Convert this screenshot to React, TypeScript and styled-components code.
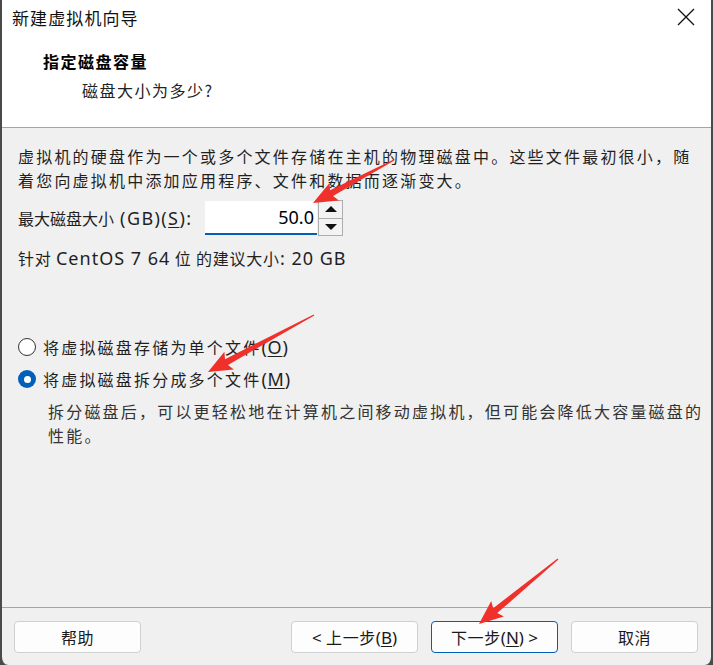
import React from "react";
import styled, { createGlobalStyle } from "styled-components";

const GlobalStyle = createGlobalStyle`
  html, body {
    margin: 0;
    padding: 0;
    background: #4a4a4a;
  }
  body {
    font-family: "Noto Sans CJK SC", "Noto Sans", sans-serif;
  }
`;

const Window = styled.div`
  position: relative;
  width: 713px;
  height: 665px;
  box-sizing: border-box;
  border-left: 2px solid #4a4a4a;
  border-right: 2px solid #4a4a4a;
  border-bottom-left-radius: 8px;
  border-bottom-right-radius: 8px;
  background: #f0f0f0;
  display: flex;
  flex-direction: column;
  overflow: hidden;
  color: #1a1a1a;
`;

const TitleBar = styled.div`
  height: 34px;
  flex: none;
  background: #fff;
  display: flex;
  align-items: center;
  justify-content: space-between;
  padding: 0 15px 0 10px;
`;

const TitleText = styled.div`
  font-size: 17px;
  letter-spacing: 1.1px;
  color: #111;
`;

const CloseButton = styled.div`
  width: 20px;
  height: 20px;
  display: flex;
  align-items: center;
  justify-content: center;
`;

const Header = styled.div`
  flex: none;
  height: 93px;
  background: #fff;
  border-bottom: 1px solid #a5a5a5;
  box-sizing: content-box;
  padding-left: 41px;
  display: flex;
  flex-direction: column;
`;

const HeaderTitle = styled.div`
  margin-top: 15px;
  font-size: 16px;
  font-weight: 700;
  letter-spacing: 1.5px;
  line-height: 24px;
  color: #000;
`;

const HeaderSub = styled.div`
  margin-top: 5px;
  padding-left: 39px;
  font-size: 16px;
  letter-spacing: 1.5px;
  line-height: 24px;
  color: #222;
`;

const Body = styled.div`
  flex: 1;
  padding: 16px 0 0 16px;
  font-size: 16px;
  letter-spacing: 2.2px;
  line-height: 24px;
  color: #1f1f1f;
`;

const Latin = styled.span<{ $size?: number; $spacing?: number }>`
  font-family: "Noto Sans", "Open Sans", sans-serif;
  font-size: ${(p) => p.$size ?? 18}px;
  letter-spacing: ${(p) => p.$spacing ?? 0.8}px;
`;

const Key = styled.span`
  text-decoration: underline;
  text-underline-offset: 2px;
`;

const Paragraph = styled.div`
  white-space: nowrap;
`;

const SizeRow = styled.div`
  margin-top: 8px;
  display: flex;
  align-items: center;
  height: 36px;
`;

const SizeLabel = styled.div`
  width: 187px;
  white-space: pre;
  letter-spacing: 0;
`;

const NumberInput = styled.div`
  width: 112px;
  height: 34px;
  box-sizing: border-box;
  background: #fff;
  border-bottom: 2px solid #005fb8;
  display: flex;
  align-items: center;
  justify-content: flex-end;
  padding-right: 3px;
  font-family: "Noto Sans", sans-serif;
  font-size: 18px;
  letter-spacing: 0;
  color: #000;
`;

const Spinner = styled.div`
  width: 25px;
  height: 36px;
  margin-left: 1px;
  box-sizing: border-box;
  border: 1px solid #adadad;
  display: flex;
  flex-direction: column;
`;

const SpinButton = styled.div<{ $top?: boolean }>`
  flex: 1;
  background: #f3f3f3;
  display: flex;
  align-items: center;
  justify-content: center;
  border-top: ${(p) => (p.$top ? "none" : "1px solid #adadad")};
`;

const Triangle = styled.div<{ $up?: boolean }>`
  width: 0;
  height: 0;
  border-left: 6px solid transparent;
  border-right: 6px solid transparent;
  ${(p) =>
    p.$up ? "border-bottom: 6px solid #111;" : "border-top: 6px solid #111;"}
`;

const Recommend = styled.div`
  margin-top: 10px;
  white-space: nowrap;
  letter-spacing: 0.8px;
`;

const Options = styled.div`
  margin-top: 65px;
  display: flex;
  flex-direction: column;
  gap: 8px;
`;

const RadioRow = styled.div`
  display: flex;
  align-items: center;
  gap: 7px;
  white-space: nowrap;
`;

const Radio = styled.div<{ $checked?: boolean }>`
  width: 18px;
  height: 18px;
  box-sizing: border-box;
  border-radius: 50%;
  flex: none;
  display: flex;
  align-items: center;
  justify-content: center;
  background: ${(p) => (p.$checked ? "#005fb8" : "#fff")};
  border: ${(p) => (p.$checked ? "none" : "1px solid #333")};
  &::after {
    content: "";
    display: ${(p) => (p.$checked ? "block" : "none")};
    width: 7px;
    height: 7px;
    border-radius: 50%;
    background: #fff;
  }
`;

const Description = styled.div`
  margin-top: 8px;
  padding-left: 30px;
  color: #333;
`;

const Footer = styled.div`
  flex: none;
  height: 58px;
  box-sizing: border-box;
  border-top: 1px solid #a5a5a5;
  display: flex;
  align-items: flex-start;
  padding: 13px 13px 0 12px;
  gap: 13px;
`;

const Spacer = styled.div`
  flex: 1;
`;

const Button = styled.div<{ $primary?: boolean }>`
  width: 127px;
  height: 32px;
  box-sizing: border-box;
  background: #fdfdfd;
  border: 1px solid ${(p) => (p.$primary ? "#005fb8" : "#d0d0d0")};
  border-radius: 4px;
  display: flex;
  align-items: center;
  justify-content: center;
  font-size: 16px;
  letter-spacing: 0.6px;
  color: #1a1a1a;
`;

const ArrowLayer = styled.svg`
  position: absolute;
  left: 0;
  top: 0;
  pointer-events: none;
`;

function arrowPoints(x1: number, y1: number, x2: number, y2: number) {
  const dx = x2 - x1;
  const dy = y2 - y1;
  const len = Math.hypot(dx, dy);
  const ux = dx / len;
  const uy = dy / len;
  const nx = -uy;
  const ny = ux;
  const head = 24;
  const bx = x2 - ux * head;
  const by = y2 - uy * head;
  const p = (x: number, y: number) => `${x.toFixed(1)},${y.toFixed(1)}`;
  return [
    p(x1 + nx * 0.6, y1 + ny * 0.6),
    p(bx + ux * 3 + nx * 3.2, by + uy * 3 + ny * 3.2),
    p(bx + nx * 10, by + ny * 10),
    p(x2, y2),
    p(bx - nx * 10, by - ny * 10),
    p(bx + ux * 3 - nx * 3.2, by + uy * 3 - ny * 3.2),
    p(x1 - nx * 0.6, y1 - ny * 0.6),
  ].join(" ");
}

const arrows = [
  [392, 160, 311, 203],
  [312, 315, 206, 372],
  [556, 559, 477, 624],
];

export default function App() {
  return (
    <>
      <GlobalStyle />
      <Window>
        <TitleBar>
          <TitleText>新建虚拟机向导</TitleText>
          <CloseButton>
            <svg width="18" height="18" viewBox="0 0 18 18">
              <path d="M1 1 L17 17 M17 1 L1 17" stroke="#111" strokeWidth="1.3" />
            </svg>
          </CloseButton>
        </TitleBar>
        <Header>
          <HeaderTitle>指定磁盘容量</HeaderTitle>
          <HeaderSub>磁盘大小为多少?</HeaderSub>
        </Header>
        <Body>
          <Paragraph>
            虚拟机的硬盘作为一个或多个文件存储在主机的物理磁盘中。这些文件最初很小，随
            <br />
            着您向虚拟机中添加应用程序、文件和数据而逐渐变大。
          </Paragraph>
          <SizeRow>
            <SizeLabel>
              最大磁盘大小<Latin $spacing={1.4}> (GB)(<Key>S</Key>):</Latin>
            </SizeLabel>
            <NumberInput>50.0</NumberInput>
            <Spinner>
              <SpinButton $top>
                <Triangle $up />
              </SpinButton>
              <SpinButton>
                <Triangle />
              </SpinButton>
            </Spinner>
          </SizeRow>
          <Recommend>
            针对 <Latin $spacing={1}>CentOS 7 64</Latin> 位 的建议大小
            <Latin $spacing={1}>: 20 GB</Latin>
          </Recommend>
          <Options>
            <RadioRow>
              <Radio />
              <span>
                将虚拟磁盘存储为单个文件<Latin>(<Key>O</Key>)</Latin>
              </span>
            </RadioRow>
            <RadioRow>
              <Radio $checked />
              <span>
                将虚拟磁盘拆分成多个文件<Latin>(<Key>M</Key>)</Latin>
              </span>
            </RadioRow>
          </Options>
          <Description>
            拆分磁盘后，可以更轻松地在计算机之间移动虚拟机，但可能会降低大容量磁盘的
            <br />
            性能。
          </Description>
        </Body>
        <Footer>
          <Button>帮助</Button>
          <Spacer />
          <Button>
            <Latin $size={17} $spacing={0}>&lt;&nbsp;</Latin>上一步
            <Latin $size={17} $spacing={0}>(<Key>B</Key>)</Latin>
          </Button>
          <Button $primary>
            下一步<Latin $size={17} $spacing={0}>(<Key>N</Key>) &gt;</Latin>
          </Button>
          <Button>取消</Button>
        </Footer>
        <ArrowLayer width="713" height="665" viewBox="0 0 713 665">
          {arrows.map(([a, b, c, d], i) => (
            <polygon key={i} points={arrowPoints(a, b, c, d)} fill="#f0302a" />
          ))}
        </ArrowLayer>
      </Window>
    </>
  );
}
